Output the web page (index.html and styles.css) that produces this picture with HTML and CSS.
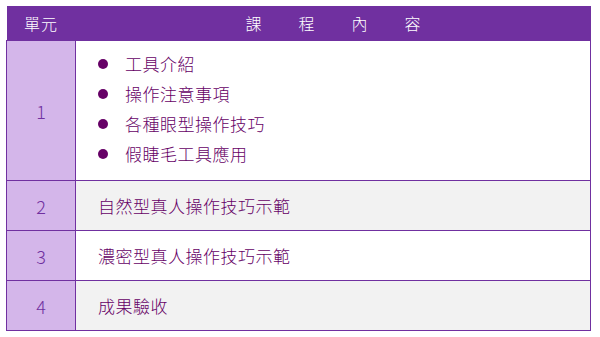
FILE: index.html
```html
<!DOCTYPE html>
<html lang="zh-Hant">
<head>
<meta charset="utf-8">
<link rel="stylesheet" href="styles.css">
</head>
<body>
<table class="course">
  <thead>
    <tr>
      <th class="unit-head">單元</th>
      <th class="content-head"><span class="spaced">課程內容</span></th>
    </tr>
  </thead>
  <tbody>
    <tr class="row-tall">
      <td class="unit">1</td>
      <td class="content">
        <ul class="items">
          <li>工具介紹</li>
          <li>操作注意事項</li>
          <li>各種眼型操作技巧</li>
          <li>假睫毛工具應用</li>
        </ul>
      </td>
    </tr>
    <tr class="row-alt">
      <td class="unit">2</td>
      <td class="content">自然型真人操作技巧示範</td>
    </tr>
    <tr>
      <td class="unit unit-white-top">3</td>
      <td class="content">濃密型真人操作技巧示範</td>
    </tr>
    <tr class="row-alt">
      <td class="unit">4</td>
      <td class="content">成果驗收</td>
    </tr>
  </tbody>
</table>
</body>
</html>
```

FILE: styles.css
```css
html, body {
  margin: 0;
  padding: 0;
  background: #ffffff;
}

body {
  padding: 6px;
  font-family: "Noto Sans CJK TC", "Noto Sans", sans-serif;
  font-size: 16px;
  font-weight: 300;
}

.course {
  width: 585px;
  border-collapse: collapse;
  table-layout: fixed;
}

.course th {
  background: #7030a0;
  color: #ffffff;
  font-weight: 300;
  height: 34px;
  padding: 0;
  text-align: center;
  vertical-align: middle;
  line-height: 34px;
  letter-spacing: 1px;
}

.unit-head {
  width: 69px;
}

.spaced {
  letter-spacing: 37px;
  margin-right: -37px;
}

.course td {
  border: 1px solid #7030a0;
  height: 49px;
  padding: 0;
  vertical-align: middle;
}

.unit {
  background: #d4b6ea;
  color: #7030a0;
  text-align: center;
  font-size: 18px;
  font-weight: 300;
}

.unit-white-top {
  border-top-color: #ffffff !important;
}

.content {
  padding-left: 22px !important;
  color: #660066;
  font-size: 17px;
  letter-spacing: 0.5px;
  background: #ffffff;
}

.row-alt .content {
  background: #f2f2f2;
}

.row-tall td {
  height: 139px;
}

.items {
  list-style: none;
  margin: 0 0 4px;
  padding: 0;
}

.items li {
  display: flex;
  align-items: center;
  gap: 17px;
  height: 30px;
  line-height: 30px;
}

.items li::before {
  content: "";
  width: 10px;
  height: 10px;
  border-radius: 50%;
  background: #660066;
  flex: none;
}
```
